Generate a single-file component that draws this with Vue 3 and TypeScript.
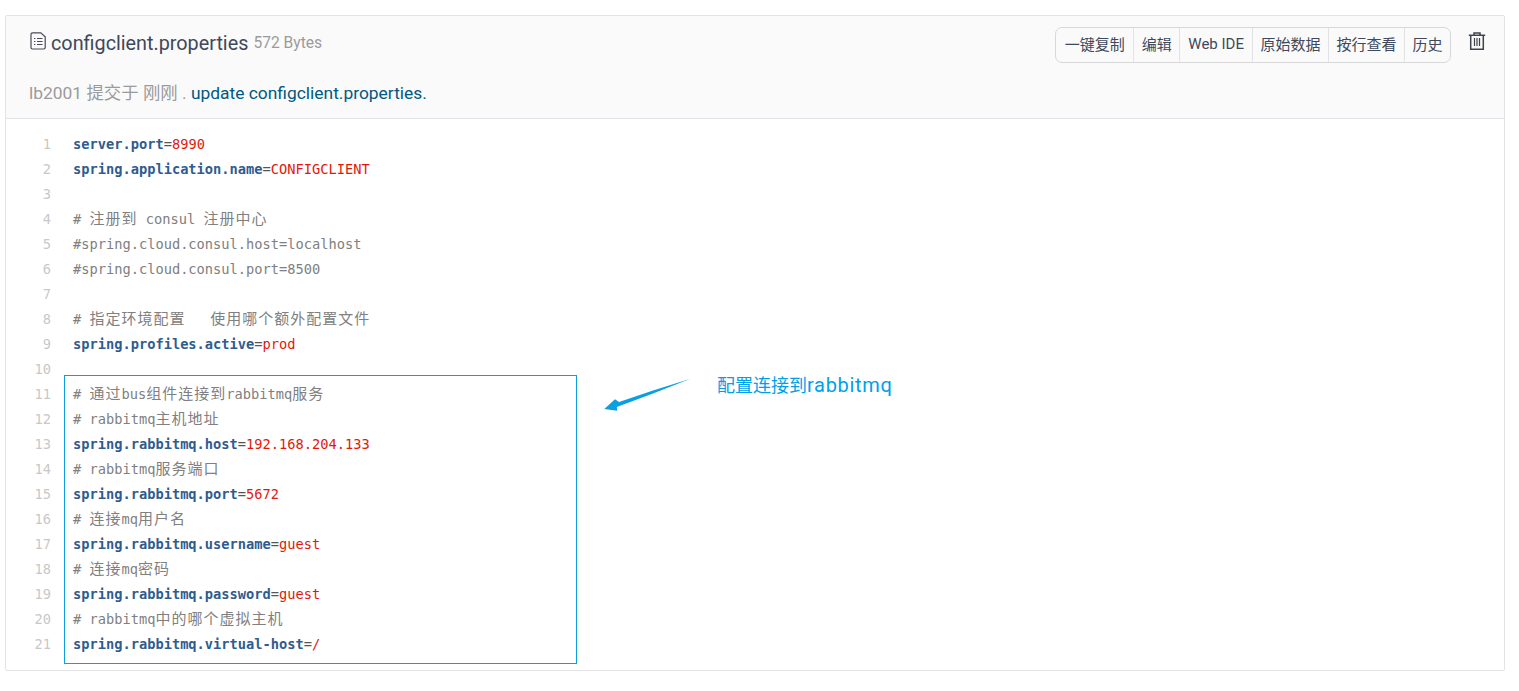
<script setup lang="ts">
type Seg = { t: string; c: string };
const k = (t: string): Seg => ({ t, c: "key" });
const e = (t: string): Seg => ({ t, c: "eq" });
const v = (t: string): Seg => ({ t, c: "val" });
const m = (t: string): Seg => ({ t, c: "cm" });
const z = (t: string): Seg => ({ t, c: "cm cjk" });
const prop = (a: string, b: string): Seg[] => [k(a), e("="), v(b)];

const lines: Seg[][] = [
  prop("server.port", "8990"),
  prop("spring.application.name", "CONFIGCLIENT"),
  [],
  [m("# "), z("注册到"), m(" consul "), z("注册中心")],
  [m("#spring.cloud.consul.host=localhost")],
  [m("#spring.cloud.consul.port=8500")],
  [],
  [m("# "), z("指定环境配置"), m("   "), z("使用哪个额外配置文件")],
  prop("spring.profiles.active", "prod"),
  [],
  [m("# "), z("通过"), m("bus"), z("组件连接到"), m("rabbitmq"), z("服务")],
  [m("# rabbitmq"), z("主机地址")],
  prop("spring.rabbitmq.host", "192.168.204.133"),
  [m("# rabbitmq"), z("服务端口")],
  prop("spring.rabbitmq.port", "5672"),
  [m("# "), z("连接"), m("mq"), z("用户名")],
  prop("spring.rabbitmq.username", "guest"),
  [m("# "), z("连接"), m("mq"), z("密码")],
  prop("spring.rabbitmq.password", "guest"),
  [m("# rabbitmq"), z("中的哪个虚拟主机")],
  prop("spring.rabbitmq.virtual-host", "/"),
];
const buttons = ["一键复制", "编辑", "Web IDE", "原始数据", "按行查看", "历史"];
</script>

<template>
  <div class="page">
    <section class="card">
      <header class="head">
        <div class="top">
          <div class="title">
            <svg class="file" viewBox="0 0 16 18" width="16" height="18" fill="none" stroke="#4a4a55" stroke-width="1.2">
              <path d="M1 2.2C1 1.3 1.5.8 2.4.8h8.4l4.4 4v10.8c0 .9-.5 1.4-1.4 1.4H2.4c-.9 0-1.4-.5-1.4-1.4z" />
              <path d="M4 6.5h1.4M7 6.5h5.5M4 9.5h1.4M7 9.5h5.5M4 12.5h1.4M7 12.5h5.5" />
            </svg>
            <span class="name">configclient.properties</span>
            <span class="size">572 Bytes</span>
          </div>
          <div class="tools">
            <div class="group">
              <span v-for="b in buttons" :key="b" class="btn" :class="{ latin: b === 'Web IDE' }">{{ b }}</span>
            </div>
            <svg class="trash" viewBox="0 0 18 18" width="18" height="18" fill="none" stroke="#3f444c" stroke-width="1.5">
              <path d="M.8 3.2h16.4M6 3V1h6v2M2.7 3.2v14h12.6v-14" />
              <path d="M6.5 6v8M9 6v8M11.5 6v8" stroke-width="1.2" />
            </svg>
          </div>
        </div>
        <div class="commit">
          <span class="who">lb2001 提交于 刚刚 . </span><span class="msg">update configclient.properties.</span>
        </div>
      </header>
      <div class="code">
        <div v-for="(line, i) in lines" :key="i" class="row">
          <span class="no">{{ i + 1 }}</span>
          <span class="src"><span v-for="(s, j) in line" :key="j" :class="s.c">{{ s.t }}</span></span>
        </div>
      </div>
    </section>

    <div class="box"></div>
    <svg class="arrow" viewBox="0 0 90 34" width="90" height="34">
      <path d="M87.5.8 50 12.5 16 24 12 21.3 1.3 31 14.3 32.7 13.8 29 50 15.5Z" fill="#0a9fe0" />
    </svg>
    <span class="note">配置连接到<span class="note-latin">rabbitmq</span></span>
  </div>
</template>

<style scoped>
.page {
  position: relative;
  width: 1519px;
  height: 691px;
  padding: 15px 14px 0 5px;
  box-sizing: border-box;
  background: #fff;
  overflow: hidden;
  font-family: Roboto, "Noto Sans CJK SC", sans-serif;
}
.card {
  border: 1px solid #e3e3e3;
  border-radius: 2px;
  height: 656px;
  box-sizing: border-box;
}
.head {
  height: 103px;
  box-sizing: border-box;
  background: #fafafa;
  border-bottom: 1px solid #dfe3e8;
  padding: 11px 18px 0 24px;
}
.top {
  display: flex;
  justify-content: space-between;
  align-items: flex-start;
}
.title {
  display: flex;
  align-items: center;
  height: 32px;
}
.file {
  margin-right: 5px;
  margin-top: -4px;
}
.name {
  font-size: 19.8px;
  color: #40485b;
}
.size {
  font-size: 15.6px;
  color: #9b9b9b;
  margin-left: 5px;
}
.tools {
  display: flex;
  align-items: flex-start;
}
.group {
  display: flex;
  height: 36px;
  box-sizing: border-box;
  border: 1px solid #d8d8d8;
  border-radius: 7px;
}
.btn {
  display: flex;
  align-items: center;
  padding: 0 7.5px 3px;
  font-size: 15px;
  color: #40485b;
  border-left: 1px solid #e3e3e3;
}
.btn:first-child {
  border-left: none;
  padding-left: 9px;
  padding-right: 8.5px;
}
.btn.latin {
  padding-left: 8px;
  padding-right: 8px;
}
.trash {
  margin-left: 17px;
  margin-top: 5px;
}
.commit {
  margin-top: 17px;
  margin-left: -1px;
  font-size: 17.4px;
  line-height: 26px;
}
.who {
  color: #9b9b9b;
}
.msg {
  color: #005980;
}
.code {
  padding-top: 13px;
}
.row {
  display: flex;
  height: 25px;
  line-height: 25px;
  font-family: "DejaVu Sans Mono", "Noto Sans CJK SC", monospace;
  font-size: 13.7px;
  white-space: pre;
}
.no {
  width: 45px;
  text-align: right;
  color: #c8c8c8;
  margin-right: 22px;
  flex: none;
}
.key {
  color: #2e5c8f;
  font-weight: 700;
}
.eq {
  color: #555;
}
.val {
  color: #e0190b;
}
.cm {
  color: #808080;
}
.cjk {
  font-size: 15px;
  letter-spacing: 1px;
}
.box {
  position: absolute;
  left: 64px;
  top: 375px;
  width: 513px;
  height: 289px;
  box-sizing: border-box;
  border: 1px solid #0f9fdc;
}
.arrow {
  position: absolute;
  left: 603px;
  top: 378px;
}
.note {
  position: absolute;
  left: 717px;
  top: 371px;
  font-size: 18px;
  line-height: 28px;
  color: #00a0e9;
}
.note-latin {
  font-size: 20px;
  letter-spacing: 0.7px;
}
</style>
